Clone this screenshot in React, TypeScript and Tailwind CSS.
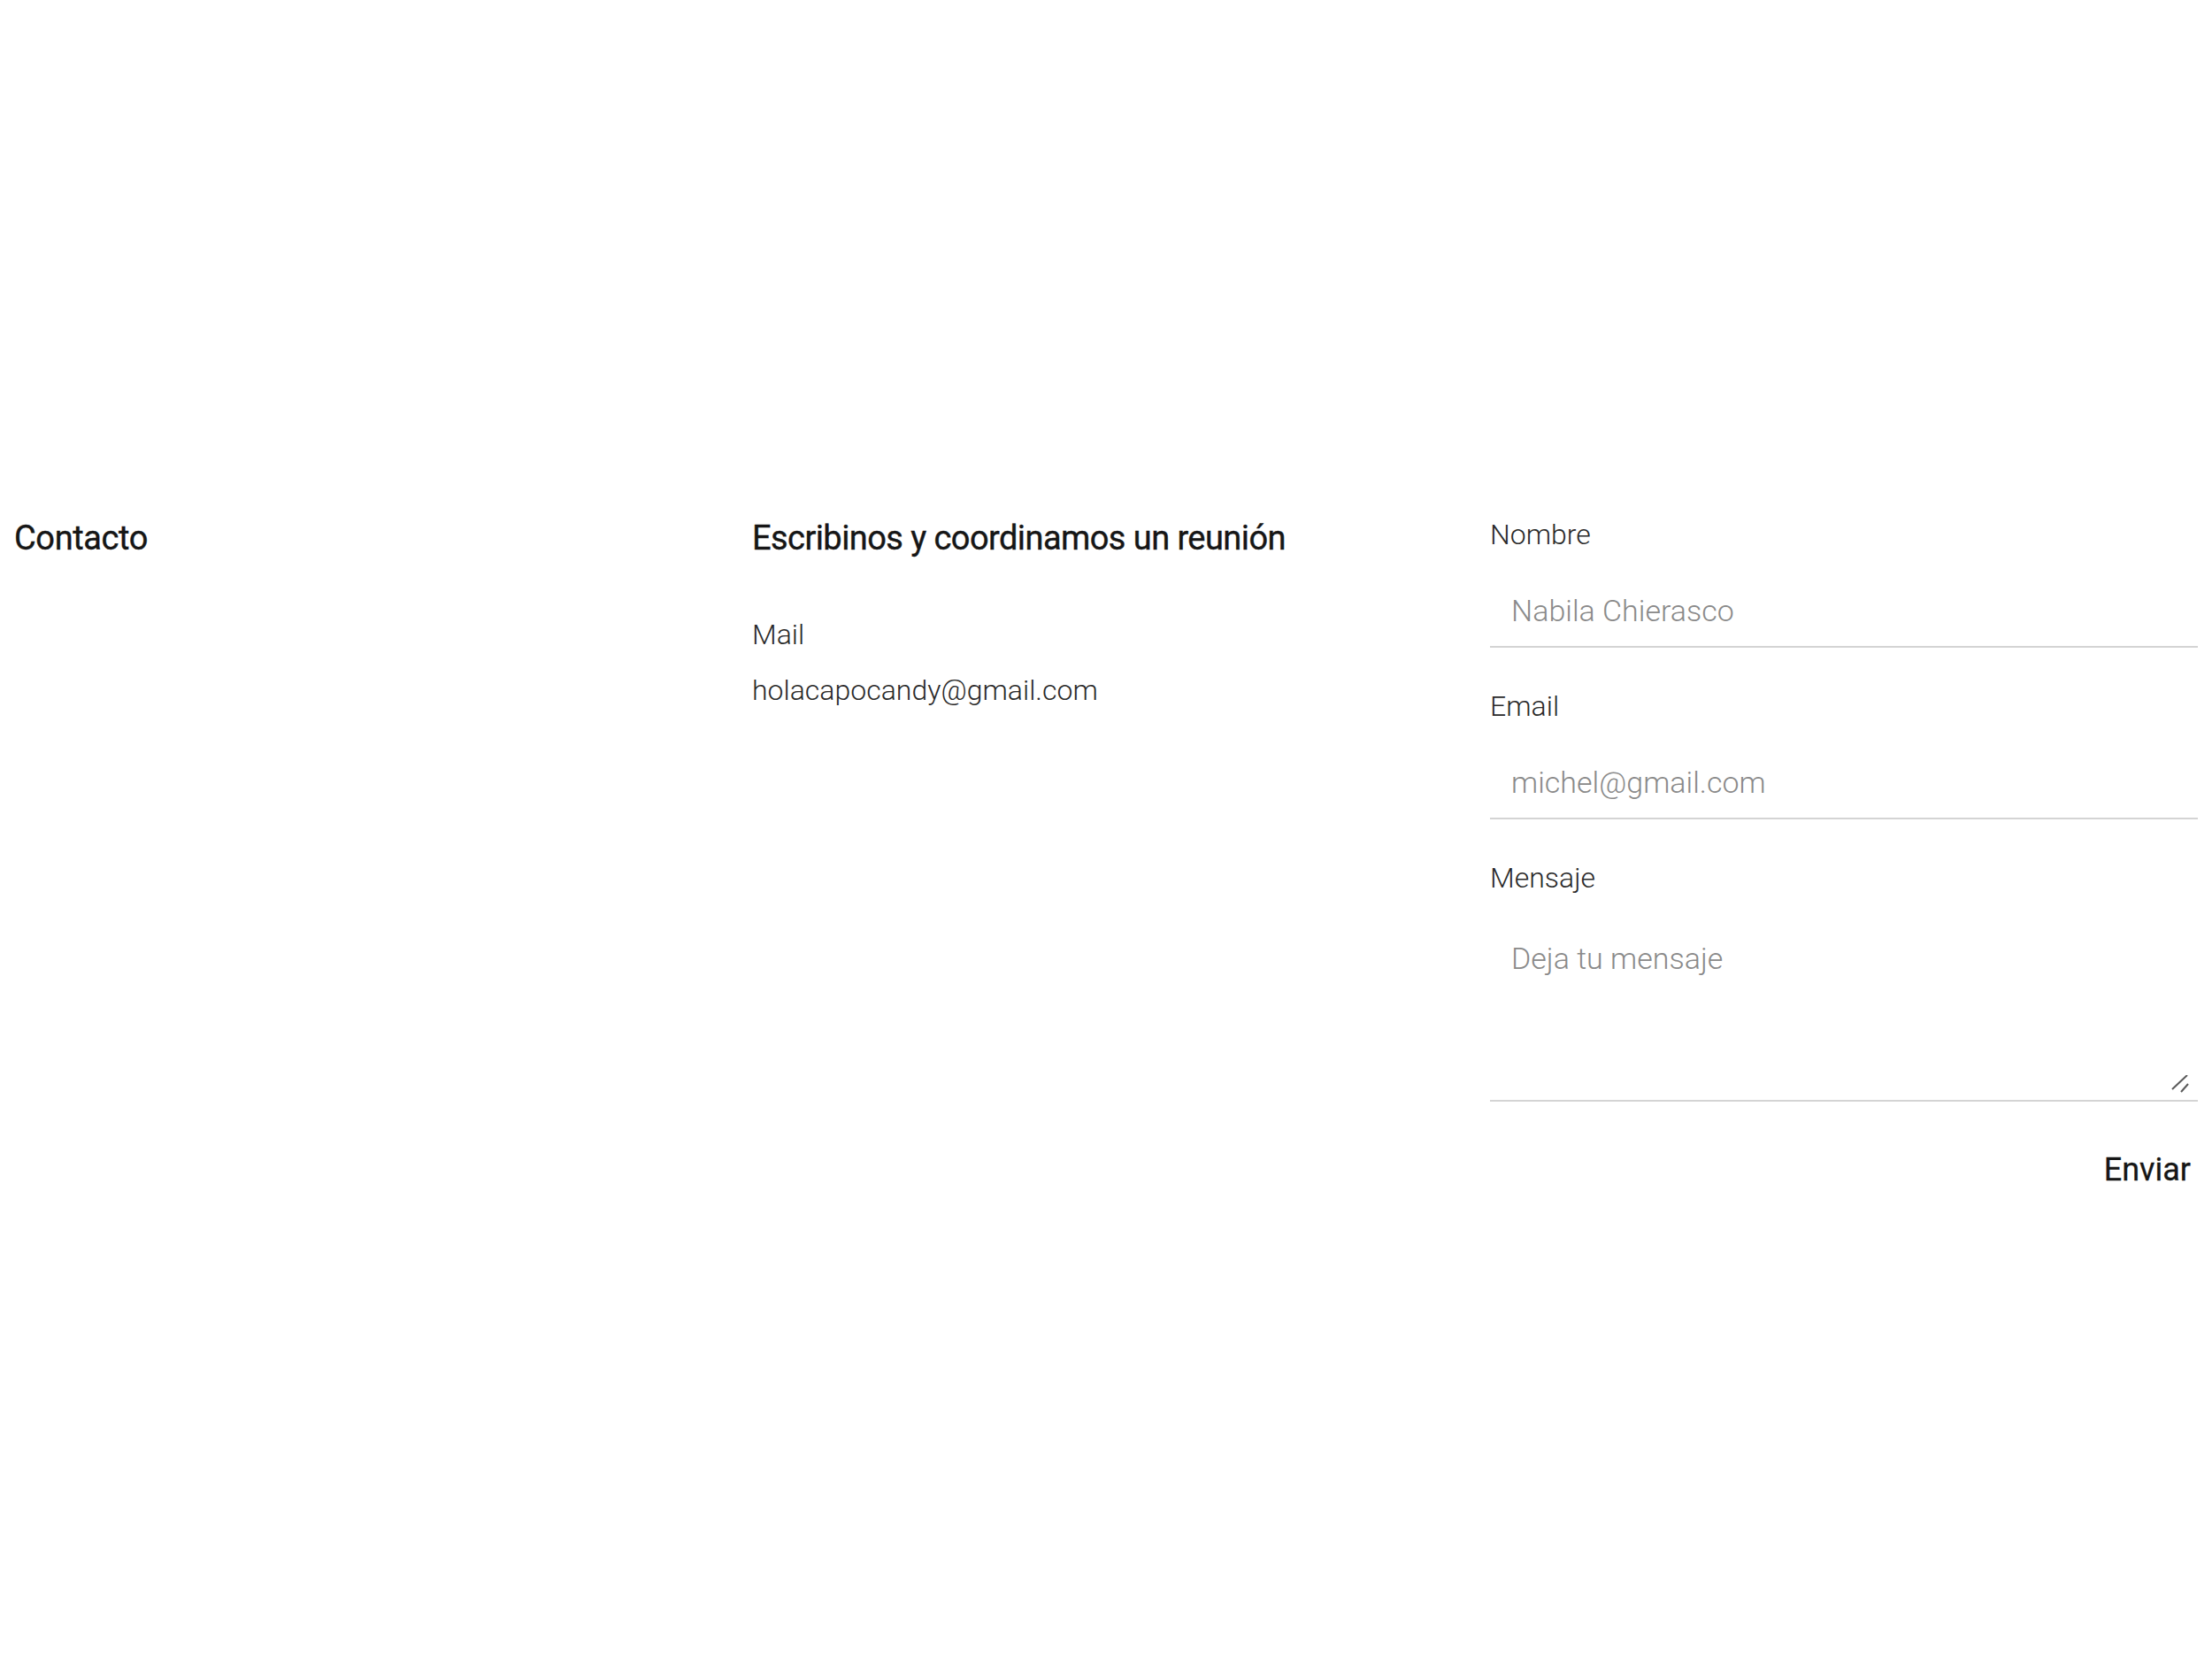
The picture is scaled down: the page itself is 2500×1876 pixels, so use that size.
import React from "react";

export default function App() {
  const font = { fontFamily: "Roboto, 'Liberation Sans', Arial, sans-serif" };
  return (
    <div className="min-h-screen bg-white text-[#1c1c1c]" style={font}>
      <section className="grid grid-cols-3 gap-[34px] px-4 pt-[584px] pb-[500px]">
        <div>
          <h1 className="text-[38px] leading-[48px] font-normal tracking-[-0.01em] text-[#161616] [-webkit-text-stroke:0.4px_#161616]">
            Contacto
          </h1>
        </div>

        <div className="flex flex-col">
          <h2 className="text-[38px] leading-[48px] font-normal tracking-[-0.015em] text-[#161616] [-webkit-text-stroke:0.4px_#161616]">
            Escribinos y coordinamos un reunión
          </h2>
          <p className="mt-[65px] text-[32px] leading-[40px] font-light text-[#2a2a2a]">Mail</p>
          <p className="mt-[23px] text-[32px] leading-[40px] font-light text-[#2a2a2a]">
            holacapocandy@gmail.com
          </p>
        </div>

        <form className="flex flex-col" onSubmit={(e) => e.preventDefault()}>
          <label className="flex flex-col">
            <span className="text-[32px] leading-[40px] font-light text-[#2a2a2a]">Nombre</span>
            <input
              type="text"
              placeholder="Nabila Chierasco"
              className="mt-[26px] border-b-2 border-[#d4d4d4] bg-transparent px-6 py-5 text-[34px] leading-[40px] font-light text-[#2a2a2a] outline-none placeholder:text-[#8a8a8a]"
            />
          </label>

          <label className="mt-[46px] flex flex-col">
            <span className="text-[32px] leading-[40px] font-light text-[#2a2a2a]">Email</span>
            <input
              type="email"
              placeholder="michel@gmail.com"
              className="mt-[26px] border-b-2 border-[#d4d4d4] bg-transparent px-6 py-5 text-[34px] leading-[40px] font-light text-[#2a2a2a] outline-none placeholder:text-[#8a8a8a]"
            />
          </label>

          <label className="mt-[46px] flex flex-col">
            <span className="text-[32px] leading-[40px] font-light text-[#2a2a2a]">Mensaje</span>
            <div className="relative mt-6">
              <textarea
                placeholder="Deja tu mensaje"
                className="block h-[209px] w-full resize-none border-b-2 border-[#d4d4d4] bg-transparent px-6 pt-[27px] pb-5 text-[34px] leading-[40px] font-light text-[#2a2a2a] outline-none placeholder:text-[#8a8a8a]"
              />
              <svg
                className="pointer-events-none absolute right-[10px] bottom-[10px]"
                width="20"
                height="20"
                viewBox="0 0 20 20"
              >
                <line x1="1" y1="16" x2="18" y2="0" stroke="#5a5a5a" strokeWidth="2" />
                <line x1="11" y1="19" x2="19" y2="10" stroke="#5a5a5a" strokeWidth="2" />
              </svg>
            </div>
          </label>

          <div className="mt-[47px] flex justify-end">
            <button
              type="submit"
              className="py-3 pr-2 text-[36px] leading-[36px] font-normal text-[#161616] [-webkit-text-stroke:0.3px_#161616]"
            >
              Enviar
            </button>
          </div>
        </form>
      </section>
    </div>
  );
}
